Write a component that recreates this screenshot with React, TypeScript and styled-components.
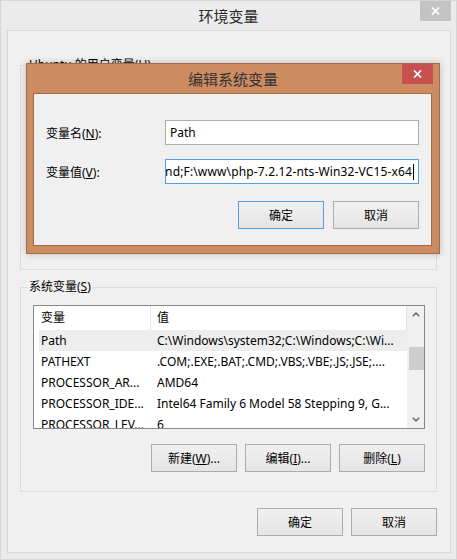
import React from "react";
import styled, { createGlobalStyle } from "styled-components";

const GlobalStyle = createGlobalStyle`
  html, body { margin: 0; padding: 0; background: #ebebeb; }
  body {
    font-family: "Noto Sans", "Noto Sans CJK SC", sans-serif;
    font-size: 12px;
    color: #000;
  }
  * { box-sizing: border-box; }
`;

const Window = styled.div`
  position: relative;
  width: 457px;
  height: 560px;
  background: #ebebeb;
  border: 1px solid #d6d6d6;
  display: flex;
  flex-direction: column;
`;

const TitleBar = styled.div<{ $h: number }>`
  height: ${(p) => p.$h}px;
  flex: none;
  display: grid;
  grid-template-columns: 1fr auto 1fr;
`;

const TitleText = styled.div<{ $h: number; $color: string }>`
  grid-column: 2;
  font-family: "Noto Sans CJK SC", sans-serif;
  font-size: 15px;
  line-height: ${(p) => p.$h}px;
  color: ${(p) => p.$color};
`;

const CloseButton = styled.div<{ $bg: string; $mr: number }>`
  grid-column: 3;
  justify-self: end;
  align-self: start;
  margin-right: ${(p) => p.$mr}px;
  width: 31px;
  height: 20px;
  background: ${(p) => p.$bg};
  display: flex;
  align-items: center;
  justify-content: center;
`;

const Client = styled.div`
  flex: 1;
  margin: 0 5px 6px 6px;
  border: 1px solid #d9d9d9;
  background: #f0f0f0;
  padding: 34px 13px 16px 12px;
  display: flex;
  flex-direction: column;
`;

const GroupBox = styled.div<{ $mt: number }>`
  position: relative;
  margin-top: ${(p) => p.$mt}px;
  height: 205px;
  border: 1px solid #dcdcdc;
  padding: 17px 11px 19px 12px;
  display: flex;
  flex-direction: column;
  flex: none;
`;

const Legend = styled.span`
  position: absolute;
  top: -9px;
  left: 6px;
  padding: 0 2px;
  line-height: 16px;
  background: #f0f0f0;
  white-space: nowrap;
`;

const ListView = styled.div`
  height: 124px;
  border: 1px solid #828790;
  background: #fff;
  display: flex;
  flex: none;
`;

const ListMain = styled.div`
  flex: 1;
  min-width: 0;
  display: flex;
  flex-direction: column;
  overflow: hidden;
`;

const Header = styled.div`
  height: 24px;
  flex: none;
  display: grid;
  grid-template-columns: 117px 1fr;
`;

const HeaderCell = styled.div<{ $pl: number }>`
  padding-left: ${(p) => p.$pl}px;
  line-height: 23px;
  border-right: 1px solid #e5e5e5;
  white-space: nowrap;
  overflow: hidden;
`;

const Rows = styled.div`
  flex: 1;
  padding-left: 5px;
  overflow: hidden;
`;

const Row = styled.div<{ $selected?: boolean }>`
  height: 21px;
  display: grid;
  grid-template-columns: 112px 1fr;
  background: ${(p) => (p.$selected ? "#ededed" : "transparent")};
`;

const Cell = styled.div<{ $pl: number }>`
  padding-left: ${(p) => p.$pl}px;
  line-height: 22px;
  white-space: nowrap;
  overflow: hidden;
`;

const ScrollBar = styled.div`
  width: 17px;
  flex: none;
  background: #f0f0f0;
  border-left: 1px solid #f0f0f0;
  display: flex;
  flex-direction: column;
`;

const ScrollArrow = styled.div`
  height: 17px;
  flex: none;
  display: flex;
  align-items: center;
  justify-content: center;
`;

const ScrollTrack = styled.div`
  flex: 1;
  display: flex;
  flex-direction: column;
  align-items: center;
`;

const ScrollThumb = styled.div<{ $top: number; $h: number }>`
  margin-top: ${(p) => p.$top}px;
  width: 15px;
  height: ${(p) => p.$h}px;
  background: #cdcdcd;
`;

const ButtonRow = styled.div<{ $mt: number; $gap: number }>`
  margin-top: ${(p) => p.$mt}px;
  display: flex;
  justify-content: flex-end;
  gap: ${(p) => p.$gap}px;
  flex: none;
`;

const Button = styled.button<{ $primary?: boolean }>`
  width: 86px;
  height: 28px;
  padding: 0;
  border: 1px solid ${(p) => (p.$primary ? "#569de5" : "#acacac")};
  background: linear-gradient(#f0f0f0, #e5e5e5);
  font-family: inherit;
  font-size: 12px;
  color: #000;
`;

const Dialog = styled.div`
  position: absolute;
  left: 25px;
  top: 62px;
  width: 414px;
  height: 191px;
  background: #cd8b62;
  border: 1px solid #a56b47;
  box-shadow: 0 0 7px rgba(0, 0, 0, 0.22);
  display: flex;
  flex-direction: column;
`;

const DialogBody = styled.div`
  flex: 1;
  margin: 0 7px 7px 6px;
  border: 1px solid #a56b47;
  background: #f0f0f0;
  padding: 26px 12px 16px 12px;
  display: flex;
  flex-direction: column;
`;

const FieldGrid = styled.div`
  display: grid;
  grid-template-columns: 119px 254px;
  row-gap: 14px;
  align-items: center;
`;

const FieldLabel = styled.div`
  white-space: nowrap;
`;

const TextField = styled.div<{ $focused?: boolean }>`
  height: 25px;
  border: 1px solid ${(p) => (p.$focused ? "#569de5" : "#abadb3")};
  background: #fff;
  padding: ${(p) => (p.$focused ? "0 4px 0 2px" : "0 3px 0 4px")};
  display: flex;
  align-items: center;
  justify-content: ${(p) => (p.$focused ? "flex-end" : "flex-start")};
  overflow: hidden;
  white-space: nowrap;
  font-size: 12px;
  letter-spacing: ${(p) => (p.$focused ? "0.14px" : "0")};
`;

const FieldText = styled.span`
  flex: none;
`;

const Caret = styled.span`
  flex: none;
  width: 1px;
  height: 16px;
  margin-left: 1px;
  background: #000;
`;

const CloseIcon = () => (
  <svg width="9" height="8" viewBox="0 0 9 8">
    <path d="M1 0.5 L8 7.5 M8 0.5 L1 7.5" stroke="#fff" strokeWidth="1.7" fill="none" />
  </svg>
);

const Chevron = ({ up }: { up?: boolean }) => (
  <svg width="8" height="5" viewBox="0 0 8 5">
    <path
      d={up ? "M0.8 4.3 L4 1.1 L7.2 4.3" : "M0.8 0.7 L4 3.9 L7.2 0.7"}
      stroke="#606060"
      strokeWidth="1.4"
      fill="none"
    />
  </svg>
);

type Item = { name: string; value: string; selected?: boolean };

const systemVars: Item[] = [
  { name: "Path", value: "C:\\Windows\\system32;C:\\Windows;C:\\Wi...", selected: true },
  { name: "PATHEXT", value: ".COM;.EXE;.BAT;.CMD;.VBS;.VBE;.JS;.JSE;...." },
  { name: "PROCESSOR_AR...", value: "AMD64" },
  { name: "PROCESSOR_IDE...", value: "Intel64 Family 6 Model 58 Stepping 9, G..." },
  { name: "PROCESSOR_LEV...", value: "6" },
];

const userVars: Item[] = [
  { name: "TEMP", value: "%USERPROFILE%\\AppData\\Local\\Temp" },
  { name: "TMP", value: "%USERPROFILE%\\AppData\\Local\\Temp" },
];

const VarList = ({ items, thumb }: { items: Item[]; thumb?: boolean }) => (
  <ListView>
    <ListMain>
      <Header>
        <HeaderCell $pl={7}>变量</HeaderCell>
        <HeaderCell $pl={6}>值</HeaderCell>
      </Header>
      <Rows>
        {items.map((it) => (
          <Row key={it.name} $selected={it.selected}>
            <Cell $pl={2}>{it.name}</Cell>
            <Cell $pl={6}>{it.value}</Cell>
          </Row>
        ))}
      </Rows>
    </ListMain>
    <ScrollBar>
      <ScrollArrow>
        <Chevron up />
      </ScrollArrow>
      <ScrollTrack>{thumb && <ScrollThumb $top={24} $h={23} />}</ScrollTrack>
      <ScrollArrow>
        <Chevron />
      </ScrollArrow>
    </ScrollBar>
  </ListView>
);

export default function App() {
  return (
    <>
      <GlobalStyle />
      <Window>
        <TitleBar $h={29}>
          <TitleText $h={29} $color="#2b2b2b">环境变量</TitleText>
          <CloseButton $bg="#c3c3c3" $mr={5}>
            <CloseIcon />
          </CloseButton>
        </TitleBar>
        <Client>
          <GroupBox $mt={0}>
            <Legend>
              Ubuntu 的用户变量(<u>U</u>)
            </Legend>
            <VarList items={userVars} />
            <ButtonRow $mt={15} $gap={8}>
              <Button>新建(N)...</Button>
              <Button>编辑(E)...</Button>
              <Button>删除(D)</Button>
            </ButtonRow>
          </GroupBox>
          <GroupBox $mt={17}>
            <Legend>
              系统变量(<u>S</u>)
            </Legend>
            <VarList items={systemVars} thumb />
            <ButtonRow $mt={15} $gap={8}>
              <Button>
                新建(<u>W</u>)...
              </Button>
              <Button>
                编辑(<u>I</u>)...
              </Button>
              <Button>
                删除(<u>L</u>)
              </Button>
            </ButtonRow>
          </GroupBox>
          <ButtonRow $mt={16} $gap={8}>
            <Button>确定</Button>
            <Button>取消</Button>
          </ButtonRow>
        </Client>

        <Dialog>
          <TitleBar $h={29}>
            <TitleText $h={29} $color="#333">编辑系统变量</TitleText>
            <CloseButton $bg="#c75050" $mr={6}>
              <CloseIcon />
            </CloseButton>
          </TitleBar>
          <DialogBody>
            <FieldGrid>
              <FieldLabel>
                变量名(<u>N</u>):
              </FieldLabel>
              <TextField>
                <FieldText>Path</FieldText>
              </TextField>
              <FieldLabel>
                变量值(<u>V</u>):
              </FieldLabel>
              <TextField $focused>
                <FieldText>
                  C:\Windows\system32;C:\Windows;C:\Windows\System32\Wbem;E:\Backend;F:\www\php-7.2.12-nts-Win32-VC15-x64
                </FieldText>
                <Caret />
              </TextField>
            </FieldGrid>
            <ButtonRow $mt={17} $gap={9}>
              <Button $primary>确定</Button>
              <Button>取消</Button>
            </ButtonRow>
          </DialogBody>
        </Dialog>
      </Window>
    </>
  );
}
